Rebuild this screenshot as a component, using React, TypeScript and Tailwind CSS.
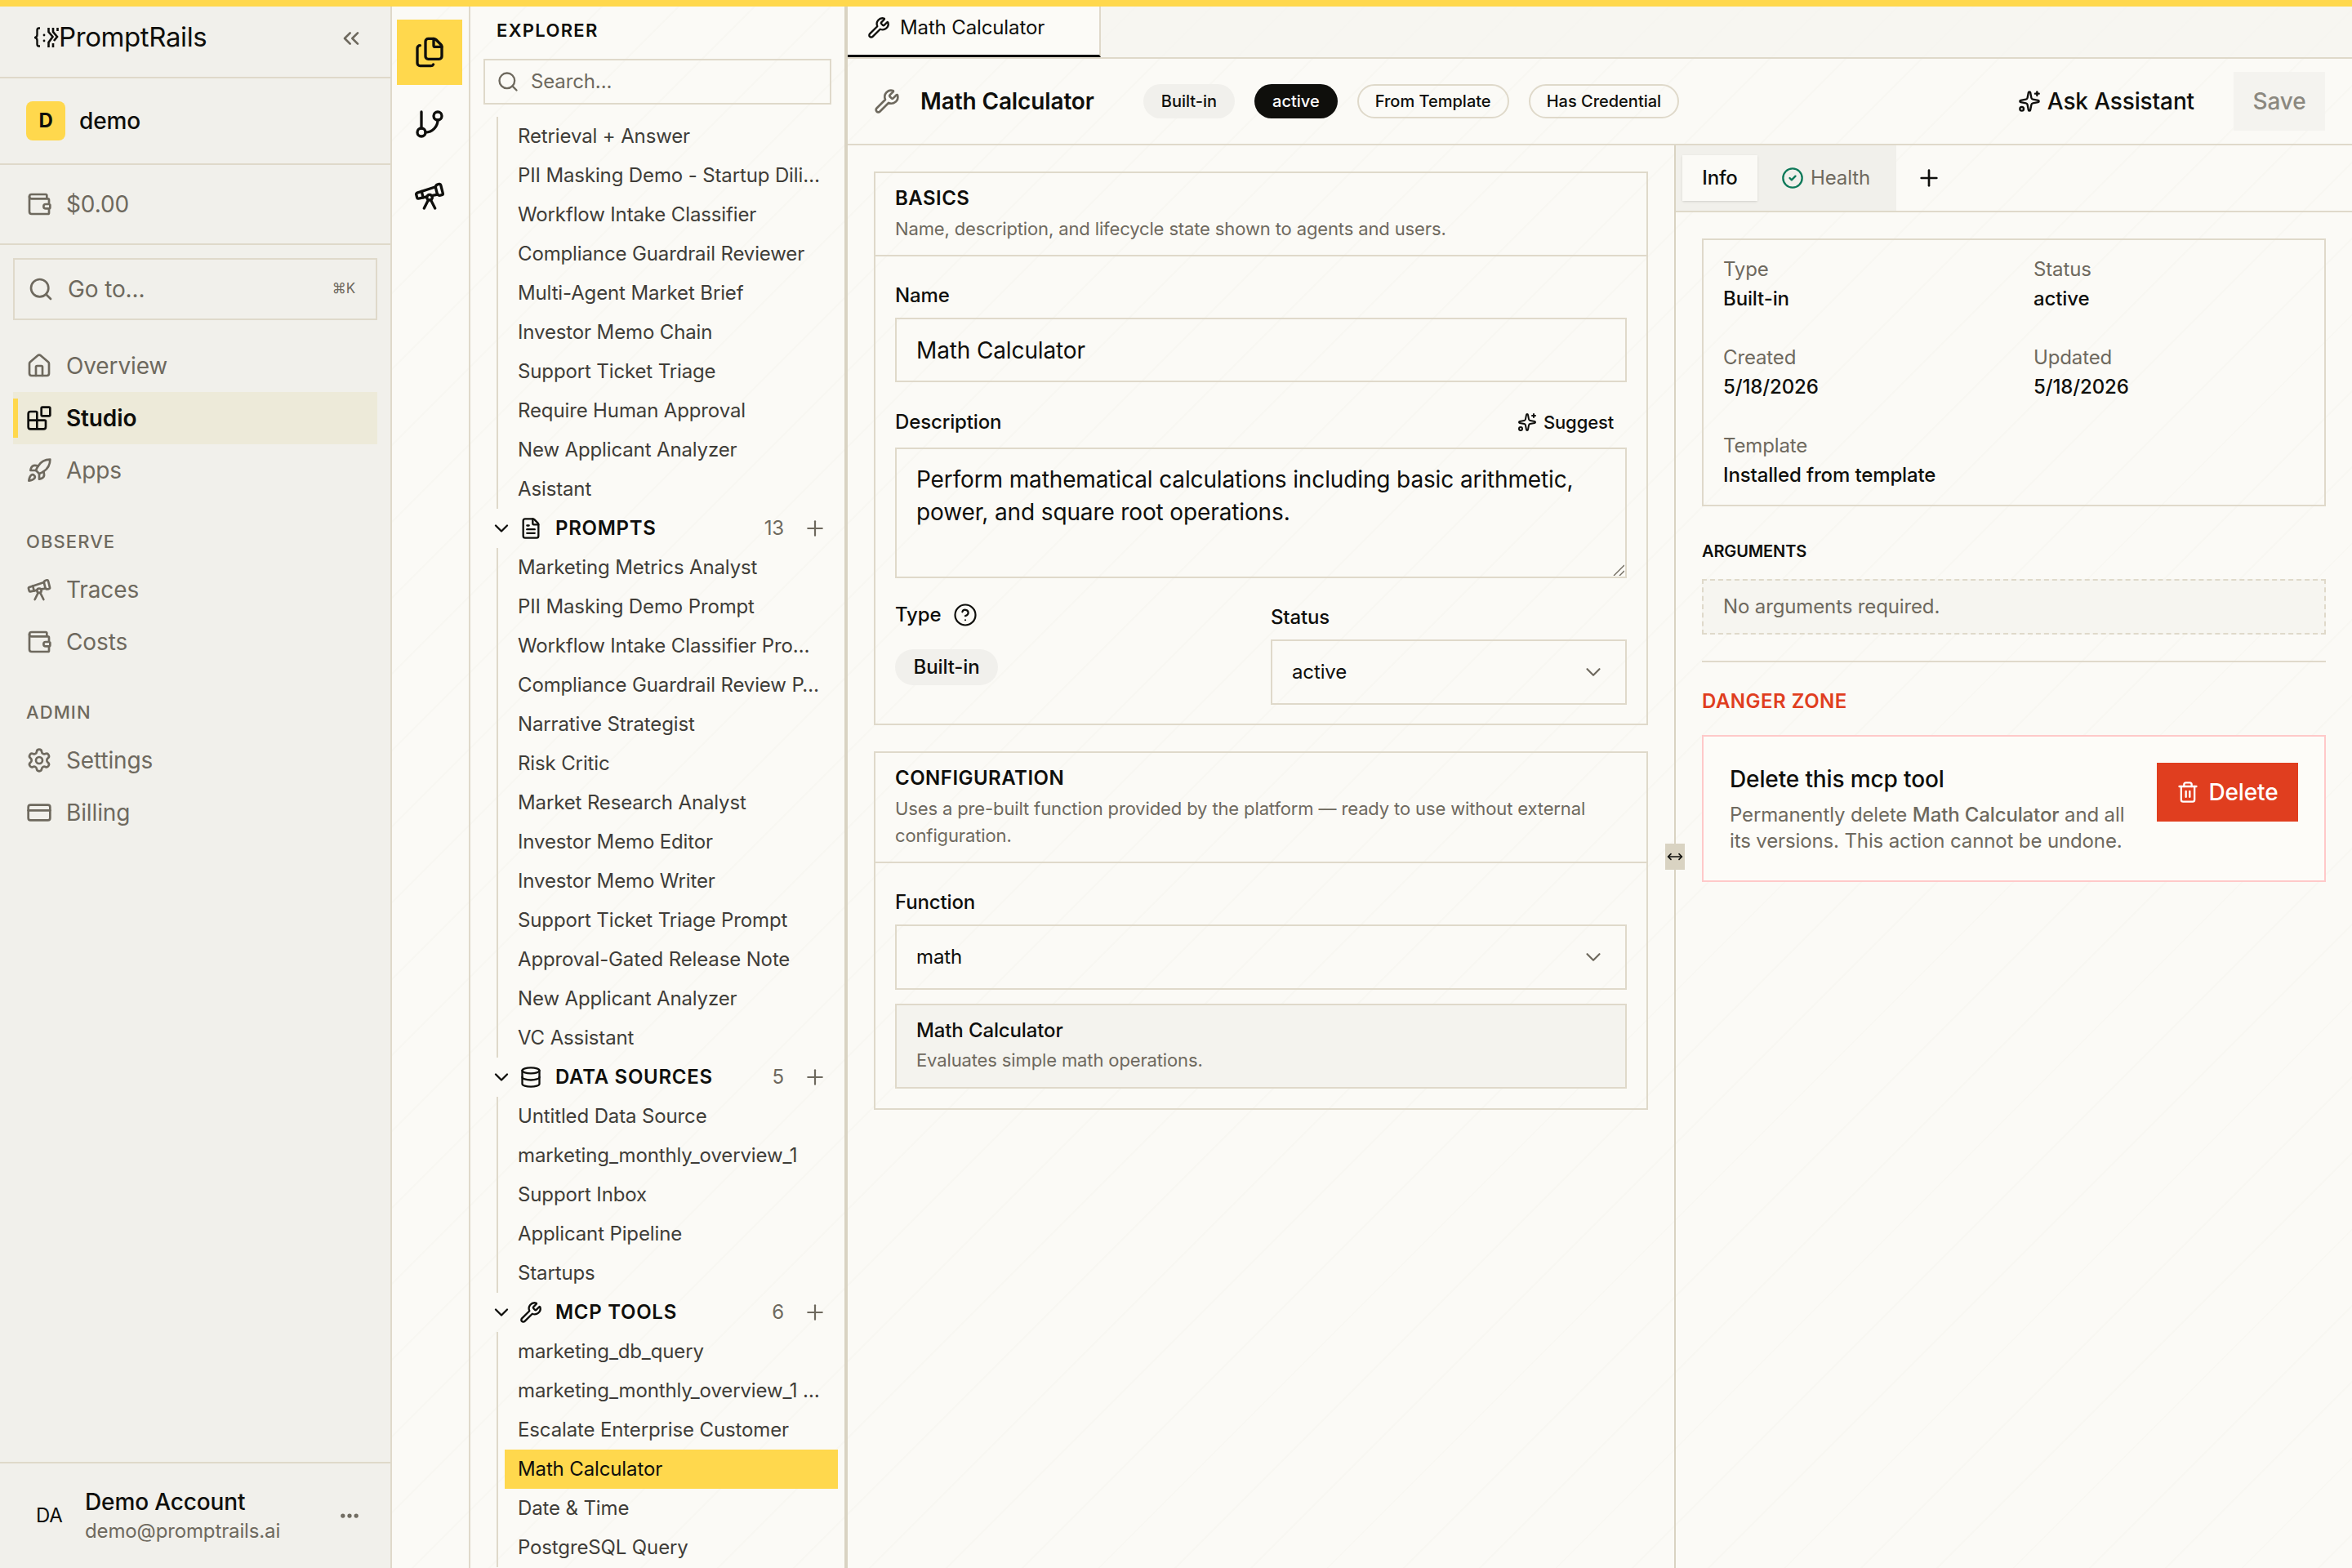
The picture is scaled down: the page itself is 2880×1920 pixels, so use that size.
import {
  Blocks,
  ChevronDown,
  ChevronsLeft,
  CircleCheck,
  CircleHelp,
  CreditCard,
  Database,
  Ellipsis,
  FileText,
  Files,
  GitBranch,
  House,
  MoveHorizontal,
  Plus,
  Rocket,
  Search,
  Settings,
  Sparkles,
  Telescope,
  Trash2,
  Wallet,
  Wrench,
  type LucideIcon,
} from 'lucide-react'

const workflows = [
  'Retrieval + Answer',
  'PII Masking Demo - Startup Dili…',
  'Workflow Intake Classifier',
  'Compliance Guardrail Reviewer',
  'Multi-Agent Market Brief',
  'Investor Memo Chain',
  'Support Ticket Triage',
  'Require Human Approval',
  'New Applicant Analyzer',
  'Asistant',
]

const prompts = [
  'Marketing Metrics Analyst',
  'PII Masking Demo Prompt',
  'Workflow Intake Classifier Pro…',
  'Compliance Guardrail Review P…',
  'Narrative Strategist',
  'Risk Critic',
  'Market Research Analyst',
  'Investor Memo Editor',
  'Investor Memo Writer',
  'Support Ticket Triage Prompt',
  'Approval-Gated Release Note',
  'New Applicant Analyzer',
  'VC Assistant',
]

const dataSources = [
  'Untitled Data Source',
  'marketing_monthly_overview_1',
  'Support Inbox',
  'Applicant Pipeline',
  'Startups',
]

const mcpTools = [
  'marketing_db_query',
  'marketing_monthly_overview_1 …',
  'Escalate Enterprise Customer',
  'Math Calculator',
  'Date & Time',
  'PostgreSQL Query',
]

function LogoMark() {
  return (
    <svg width="30" height="26" viewBox="0 0 30 26" fill="none" stroke="#0f0f0c" strokeWidth="2.4" className="shrink-0">
      <path d="M7 1.5H5.5C4 1.5 3.5 2.5 3.5 4v5.5c0 1.5-.8 3-2.5 3.500 1.700.500 2.500 2 2.500 3.500V21c0 1.500.500 2.500 2 2.500H7" />
      <circle cx="12" cy="10" r="1.400" fill="#0f0f0c" stroke="none" />
      <circle cx="12" cy="17" r="1.400" fill="#0f0f0c" stroke="none" />
      <path d="M17.500 1v5l5 6-5 7v6M23 1v5l5 6-4 5M23 20v5M28.500 1v4" strokeWidth="2.600" />
    </svg>
  )
}

function NavItem({ icon: Icon, label, active }: { icon: LucideIcon; label: string; active?: boolean }) {
  return (
    <div className={`relative mx-4 flex h-16 items-center gap-[17px] pl-4 text-[28px] ${active ? 'bg-[#edead9] font-semibold text-[#0f0f0c]' : 'text-[#6e695e]'}`}>
      {active && <div className="absolute left-0 top-2 h-12 w-[6px] bg-[#ffd84d]" />}
      <Icon size={32} strokeWidth={2} className="shrink-0" />
      <span>{label}</span>
    </div>
  )
}

function Sidebar() {
  return (
    <aside className="flex w-[480px] shrink-0 flex-col border-r-2 border-[#dfd9ca] bg-[#f1f0eb]">
      <div className="flex h-[88px] items-center justify-between border-b-2 border-[#dfd9ca] pb-2 pl-[42px] pr-[32px]">
        <div className="-mt-[3px] flex items-center">
          <LogoMark />
          <span className="text-[33px] leading-none tracking-[-0.400px] text-[#0f0f0c]">PromptRails</span>
        </div>
        <ChevronsLeft size={32} strokeWidth={2} className="text-[#6e695e]" />
      </div>
      <div className="flex h-[106px] items-center gap-[17px] border-b-2 border-[#dfd9ca] pl-8">
        <div className="flex size-12 items-center justify-center rounded-lg bg-[#ffd84d] text-[24px] font-bold text-[#0f0f0c]">D</div>
        <span className="text-[28px] font-medium text-[#0f0f0c]">demo</span>
      </div>
      <div className="flex h-[98px] items-center gap-[17px] border-b-2 border-[#dfd9ca] pl-8 text-[28px] text-[#6e695e]">
        <Wallet size={32} strokeWidth={2} />
        <span>$0.00</span>
      </div>
      <div className="mx-4 mt-4 flex h-[76px] items-center border-2 border-[#dfd9ca] pl-4 pr-[25px] text-[#6e695e]">
        <Search size={32} strokeWidth={2} className="shrink-0" />
        <span className="ml-[17px] flex-1 text-[28px]">Go to...</span>
        <span className="text-[17px]">⌘K</span>
      </div>
      <div className="mt-6">
        <NavItem icon={House} label="Overview" />
        <NavItem icon={Blocks} label="Studio" active />
        <NavItem icon={Rocket} label="Apps" />
      </div>
      <div className="mb-[11px] mt-[39px] pl-8 text-[22px] font-medium leading-8 tracking-[1.100px] text-[#6e695e]">OBSERVE</div>
      <NavItem icon={Telescope} label="Traces" />
      <NavItem icon={Wallet} label="Costs" />
      <div className="mb-[11px] mt-[38px] pl-8 text-[22px] font-medium leading-8 tracking-[1.100px] text-[#6e695e]">ADMIN</div>
      <NavItem icon={Settings} label="Settings" />
      <NavItem icon={CreditCard} label="Billing" />
      <div className="mt-auto flex h-[130px] items-center border-t-2 border-[#dfd9ca] pl-[44px] pr-[36px]">
        <span className="w-[60px] text-[24px] text-[#0f0f0c]">DA</span>
        <div className="-mt-[3px] flex-1">
          <div className="text-[28px] font-medium leading-10 text-[#0f0f0c]">Demo Account</div>
          <div className="text-[24px] leading-8 text-[#6e695e]">demo@promptrails.ai</div>
        </div>
        <Ellipsis size={28} strokeWidth={2.500} className="text-[#6e695e]" />
      </div>
    </aside>
  )
}

function ActivityBar() {
  return (
    <nav className="flex w-24 shrink-0 flex-col items-center gap-2 border-r-2 border-[#dfd9ca] pr-[2px] pt-4 text-[#0f0f0c]">
      <div className="flex size-20 items-center justify-center bg-[#ffd84d]">
        <Files size={40} strokeWidth={2} />
      </div>
      <div className="flex size-20 items-center justify-center">
        <GitBranch size={40} strokeWidth={2} />
      </div>
      <div className="flex size-20 items-center justify-center">
        <Telescope size={40} strokeWidth={2} />
      </div>
    </nav>
  )
}

function TreeItems({ items, selected }: { items: string[]; selected?: string }) {
  return (
    <div className="ml-8 border-l-2 border-[#dfd9ca]">
      {items.map((name) => (
        <div
          key={name}
          className={`ml-2 flex h-12 w-[408px] items-center whitespace-nowrap px-4 text-[24px] ${name === selected ? 'bg-[#ffd84d] text-[#0f0f0c]' : 'text-[#3f3d38]'}`}
        >
          {name}
        </div>
      ))}
    </div>
  )
}

function TreeHeader({ icon: Icon, label, count }: { icon: LucideIcon; label: string; count: number }) {
  return (
    <div className="flex h-12 items-center pl-6 pr-[21px]">
      <ChevronDown size={28} strokeWidth={2} className="shrink-0 text-[#0f0f0c]" />
      <Icon size={28} strokeWidth={2} className="ml-2 shrink-0 text-[#0f0f0c]" />
      <span className="ml-4 flex-1 text-[24px] font-semibold tracking-[0.720px] text-[#0f0f0c]">{label}</span>
      <span className="text-[24px] text-[#6e695e]">{count}</span>
      <Plus size={30} strokeWidth={1.750} className="ml-[23px] shrink-0 text-[#6e695e]" />
    </div>
  )
}

function Explorer() {
  return (
    <div className="w-[462px] shrink-0 overflow-hidden border-r-4 border-[#d9d3c2]">
      <div className="mb-[6px] flex h-[58px] items-center pl-8 text-[22px] font-semibold leading-none tracking-[1.320px] text-[#0f0f0c]">EXPLORER</div>
      <div className="mx-4 flex h-14 items-center gap-[14px] border-2 border-[#dfd9ca] pl-[14px] text-[24px] text-[#6e695e]">
        <Search size={28} strokeWidth={2} />
        <span>Search...</span>
      </div>
      <div className="mt-[15px]">
        <TreeItems items={workflows} />
        <TreeHeader icon={FileText} label="PROMPTS" count={13} />
        <TreeItems items={prompts} />
        <TreeHeader icon={Database} label="DATA SOURCES" count={5} />
        <TreeItems items={dataSources} />
        <TreeHeader icon={Wrench} label="MCP TOOLS" count={6} />
        <TreeItems items={mcpTools} selected="Math Calculator" />
      </div>
    </div>
  )
}

function Pill({ children, kind }: { children: string; kind: 'soft' | 'dark' | 'line' }) {
  const look = {
    soft: 'px-[22px] bg-[#f1f0ec] text-[#0f0f0c]',
    dark: 'px-[22px] bg-[#0f0f0c] text-white',
    line: 'px-[20px] border-2 border-[#dfd9ca] text-[#0f0f0c]',
  }[kind]
  return <span className={`flex h-[42px] items-center rounded-full text-[20px] font-medium tracking-[0px] ${look}`}>{children}</span>
}

function SelectBox({ value }: { value: string }) {
  return (
    <div className="flex h-20 items-center justify-between border-2 border-[#dfd9ca] pl-6 pr-6 text-[24px] text-[#0f0f0c]">
      <span>{value}</span>
      <ChevronDown size={30} strokeWidth={1.750} className="text-[#6e695e]" />
    </div>
  )
}

function CardHeader({ title, children }: { title: string; children: React.ReactNode }) {
  return (
    <div className="border-b-2 border-[#dfd9ca] px-6 py-[15px]">
      <div className="text-[24px] font-semibold leading-8 tracking-[0.480px] text-[#0f0f0c]">{title}</div>
      <div className="mt-[5px] text-[22px] leading-[33px] text-[#6e695e]">{children}</div>
    </div>
  )
}

function ToolForm() {
  return (
    <div className="w-[1012px] shrink-0 p-8">
      <section className="border-2 border-[#dfd9ca]">
        <CardHeader title="BASICS">Name, description, and lifecycle state shown to agents and users.</CardHeader>
        <div className="px-6 pb-[23px] pt-8">
          <div className="text-[24px] font-medium leading-8 text-[#0f0f0c]">Name</div>
          <div className="mt-[11px] flex h-[79px] items-center border-2 border-[#dfd9ca] pl-6 text-[28px] text-[#0f0f0c]">Math Calculator</div>
          <div className="mb-[15px] mt-[33px] flex h-8 items-center justify-between pr-4">
            <span className="text-[24px] font-medium text-[#0f0f0c]">Description</span>
            <span className="flex items-center gap-2 text-[22px] font-medium text-[#0f0f0c]">
              <Sparkles size={24} strokeWidth={2} />
              Suggest
            </span>
          </div>
          <div className="relative h-40 border-2 border-[#dfd9ca] px-6 pt-[17px] text-[28px] leading-10 text-[#0f0f0c]">
            Perform mathematical calculations including basic arithmetic, power, and square root operations.
            <svg width="14" height="14" viewBox="0 0 14 14" className="absolute bottom-[1px] right-[1px]" stroke="#6e695e" strokeWidth="1.400">
              <path d="M1 14 14 1M8 14l6-6" />
            </svg>
          </div>
          <div className="mt-[29px] grid grid-cols-2 gap-x-6">
            <div>
              <div className="flex h-8 items-center gap-[15px] text-[24px] font-medium text-[#0f0f0c]">
                Type
                <CircleHelp size={30} strokeWidth={1.750} />
              </div>
              <span className="mt-[26px] flex h-11 w-[126px] items-center justify-center rounded-full bg-[#f1f0ec] text-[24px] font-medium text-[#0f0f0c]">Built-in</span>
            </div>
            <div className="pt-[3px]">
              <div className="mb-[11px] text-[24px] font-medium leading-8 text-[#0f0f0c]">Status</div>
              <SelectBox value="active" />
            </div>
          </div>
        </div>
      </section>
      <section className="mt-8 border-2 border-[#dfd9ca]">
        <CardHeader title="CONFIGURATION">Uses a pre-built function provided by the platform — ready to use without external configuration.</CardHeader>
        <div className="px-6 pb-6 pt-8">
          <div className="mb-[11px] text-[24px] font-medium leading-8 text-[#0f0f0c]">Function</div>
          <SelectBox value="math" />
          <div className="mt-[17px] h-[104px] border-2 border-[#dfd9ca] bg-[#f4f3ee] px-6 pt-[15px]">
            <div className="text-[24px] font-medium leading-8 text-[#0f0f0c]">Math Calculator</div>
            <div className="mt-1 text-[22px] leading-[33px] text-[#6e695e]">Evaluates simple math operations.</div>
          </div>
        </div>
      </section>
    </div>
  )
}

function InfoField({ label, value }: { label: string; value: string }) {
  return (
    <div className="text-[24px] leading-9">
      <div className="text-[#6e695e]">{label}</div>
      <div className="font-medium text-[#0f0f0c]">{value}</div>
    </div>
  )
}

function InfoPanel() {
  return (
    <div className="relative flex-1 border-l-2 border-[#d9d3c2]">
      <div className="absolute -left-[13px] top-[855px] flex h-8 w-6 items-center justify-center bg-[#d9d3c2] text-[#0f0f0c]">
        <MoveHorizontal size={20} strokeWidth={2} />
      </div>
      <div className="flex h-[82px] items-stretch border-b-2 border-[#dfd9ca]">
        <div className="flex w-[270px] items-center bg-[#f1f0eb] pl-2">
          <span className="flex h-14 w-[92px] items-center justify-center bg-[#fbfaf6] text-[24px] font-medium text-[#0f0f0c] shadow-sm">Info</span>
          <span className="ml-[29px] flex items-center gap-2 text-[24px] text-[#6e695e]">
            <CircleCheck size={28} strokeWidth={2} className="text-[#0f7a5a]" />
            Health
          </span>
        </div>
        <Plus size={32} strokeWidth={2} className="ml-6 self-center text-[#0f0f0c]" />
      </div>
      <div className="px-8 pt-8">
        <div className="grid grid-cols-2 gap-x-12 gap-y-9 border-2 border-[#dfd9ca] px-6 py-[18px]">
          <InfoField label="Type" value="Built-in" />
          <InfoField label="Status" value="active" />
          <InfoField label="Created" value="5/18/2026" />
          <InfoField label="Updated" value="5/18/2026" />
          <InfoField label="Template" value="Installed from template" />
        </div>
        <div className="mt-[41px] text-[20px] font-semibold leading-7 text-[#0f0f0c]">ARGUMENTS</div>
        <div className="mt-[20px] flex h-[68px] items-center border-2 border-dashed border-[#dfd9ca] bg-[#f6f5f0] pl-6 text-[24px] text-[#6e695e]">No arguments required.</div>
        <div className="mt-8 h-[2px] bg-[#dfd9ca]" />
        <div className="mt-[32px] text-[24px] font-semibold leading-8 tracking-[0.500px] text-[#e03e1f]">DANGER ZONE</div>
        <div className="mt-[25px] flex items-start justify-between border-2 border-[#ffc9c9] bg-[#fdfcf8] p-8">
          <div className="w-[500px]">
            <div className="text-[28px] font-medium leading-10 text-[#0f0f0c]">Delete this mcp tool</div>
            <div className="mt-2 text-[24px] leading-8 text-[#6e695e]">
              <div>
                Permanently delete <span className="font-medium">Math Calculator</span> and all
              </div>
              <div>its versions. This action cannot be undone.</div>
            </div>
          </div>
          <div className="flex h-[72px] w-[173px] items-center justify-center gap-[11px] bg-[#e03e1f] text-[28px] font-medium text-white">
            <Trash2 size={28} strokeWidth={2} />
            Delete
          </div>
        </div>
      </div>
    </div>
  )
}

function MainPane() {
  return (
    <main className="flex min-w-0 flex-1 flex-col">
      <div className="flex h-16 shrink-0 border-b-2 border-[#dfd9ca] bg-[#f5f4ee]/60">
        <div className="flex h-[62px] w-[310px] items-center gap-3 border-b-[3px] border-r-2 border-b-[#0f0f0c] border-r-[#dfd9ca] bg-[#fcfbf7] pb-2 pl-6 text-[24px] text-[#0f0f0c]">
          <Wrench size={28} strokeWidth={2} />
          Math Calculator
        </div>
      </div>
      <header className="flex h-[106px] shrink-0 items-center border-b-2 border-[#dfd9ca] pl-8 pr-[33px]">
        <Wrench size={32} strokeWidth={2} className="text-[#6e695e]" />
        <h1 className="ml-[25px] text-[28px] font-semibold text-[#0f0f0c]">Math Calculator</h1>
        <div className="ml-[60px] flex items-center gap-6">
          <Pill kind="soft">Built-in</Pill>
          <Pill kind="dark">active</Pill>
          <Pill kind="line">From Template</Pill>
          <Pill kind="line">Has Credential</Pill>
        </div>
        <div className="ml-auto flex items-center gap-2 text-[28px] font-medium text-[#0f0f0c]">
          <Sparkles size={28} strokeWidth={2} />
          Ask Assistant
        </div>
        <div className="ml-12 flex h-[72px] w-[112px] items-center justify-center bg-[#f4f3ef] text-[28px] font-medium text-[#8b887f]">Save</div>
      </header>
      <div className="flex min-h-0 flex-1">
        <ToolForm />
        <InfoPanel />
      </div>
    </main>
  )
}

export default function App() {
  return (
    <div className="flex h-[1920px] w-[2880px] flex-col overflow-hidden bg-[#fbfaf6] bg-[repeating-linear-gradient(135deg,transparent,transparent_64px,#f8f7f2_64px,#f8f7f2_66px)] font-[Inter,sans-serif] tracking-[-0.130px]">
      <div className="h-2 shrink-0 bg-[#ffd84d]" />
      <div className="flex min-h-0 flex-1">
        <Sidebar />
        <ActivityBar />
        <Explorer />
        <MainPane />
      </div>
    </div>
  )
}
